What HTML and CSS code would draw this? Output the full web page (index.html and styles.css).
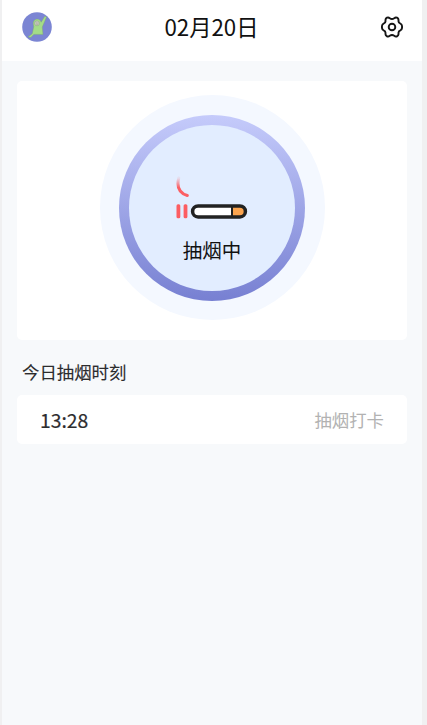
FILE: index.html
```html
<!DOCTYPE html>
<html lang="zh-CN">
<head>
<meta charset="utf-8">
<title>抽烟记录</title>
<link rel="stylesheet" href="styles.css">
</head>
<body>
<div class="app">
  <header class="header">
    <svg class="avatar" viewBox="0 0 30 30">
      <circle cx="15" cy="15" r="14.8" fill="#7b85d3"/>
      <path d="M11.800 14.500C10.300 10.500 12 7.300 15 7.100c2.200 0 3.600 1.300 4.100 3.100L22.800 4.300l1.800.6-4.300 10.200.7 7.300h-9.200L8.800 25.400l-2.800-.3 4.200-3.400z" fill="#a4dc88" stroke="#78a273" stroke-width=".4" stroke-linejoin="round"/>
      <circle cx="15" cy="11.300" r="2.500" fill="#c3c9ba" stroke="#7d9877" stroke-width=".4"/>
      <path d="M14 11h.7M15.700 11h.7M14.600 12.400h1" stroke="#8c7d83" stroke-width=".5"/>
    </svg>
    <h1 class="date">02月20日</h1>
    <svg class="settings" viewBox="0 0 22 22" fill="none" stroke="#161616" stroke-width="1.900" stroke-linejoin="round">
      <path d="M6 1.700C7.100 1.100 8 1.500 8.800 2.300Q11 3.800 13.200 2.300C14 1.500 14.900 1.100 16 1.700C17.500 2.500 17.700 3.400 17.500 4.700Q17.300 7 19.400 7.700C20.800 8.200 21.100 9.500 21.100 11S20.800 13.800 19.400 14.300Q17.300 15 17.500 17.300C17.700 18.600 17.500 19.500 16 20.300C14.900 20.900 14 20.500 13.200 19.700Q11 18.200 8.800 19.700C8 20.500 7.100 20.900 6 20.300C4.500 19.500 4.300 18.600 4.500 17.300Q4.700 15 2.600 14.300C1.200 13.800.9 12.500.9 11S1.200 8.200 2.600 7.700Q4.700 7 4.500 4.700C4.300 3.400 4.500 2.500 6 1.700Z"/>
      <circle cx="11" cy="11" r="3.300"/>
    </svg>
  </header>
  <main class="content">
    <section class="card">
      <div class="halo">
        <div class="ring">
          <div class="dial">
            <svg class="cigarette" viewBox="0 0 74 46">
              <defs>
                <linearGradient id="smoke" x1="0" y1="0" x2="0" y2="1">
                  <stop offset="0" stop-color="#fb5f64" stop-opacity=".1"/>
                  <stop offset=".55" stop-color="#fb5f64"/>
                </linearGradient>
              </defs>
              <path d="M3.700 2C2 9 2.600 16.500 12.300 19.500" fill="none" stroke="url(#smoke)" stroke-width="3" stroke-linecap="round"/>
              <rect x="1.500" y="28.300" width="3.800" height="14" rx="1.500" fill="#fc5d62"/>
              <rect x="8.600" y="28.300" width="3.800" height="14" rx="1.500" fill="#fc5d62"/>
              <rect x="17.600" y="29.900" width="52.800" height="11" rx="5.500" fill="#fff"/>
              <path d="M57 29.900h7.900a5.500 5.500 0 0 1 0 11H57z" fill="#fca44e"/>
              <path d="M57 29.700v11.400" stroke="#222" stroke-width="2"/>
              <rect x="17.600" y="29.900" width="52.800" height="11" rx="5.500" fill="none" stroke="#222" stroke-width="3.500"/>
            </svg>
            <span class="status">抽烟中</span>
          </div>
        </div>
      </div>
    </section>
    <h2 class="heading">今日抽烟时刻</h2>
    <div class="record">
      <span class="time">13:28</span>
      <span class="label">抽烟打卡</span>
    </div>
  </main>
</div>
</body>
</html>
```
FILE: styles.css
```css
* { box-sizing: border-box; }
body {
  margin: 0;
  background: #f0f0f1;
  font-family: "Noto Sans CJK SC", sans-serif;
  color: #161616;
}
.app {
  height: 725px;
  margin: 0 5px 0 2px;
  background: #f7f9fb;
}
.header {
  height: 61px;
  padding: 0 19px 8px 20px;
  display: grid;
  grid-template-columns: 30px 1fr 22px;
  align-items: center;
  background: #fff;
}
.avatar { width: 30px; height: 30px; }
.date {
  margin: 0 0 1px;
  padding-right: 10px;
  font-size: 22.300px;
  font-weight: 400;
  line-height: 30px;
  text-align: center;
  color: #111;
}
.settings { width: 22px; height: 22px; }
.content { padding: 20px 15px 0; }
.card {
  height: 259px;
  padding-top: 14px;
  border-radius: 5px;
  background: #fff;
}
.halo {
  width: 225px;
  height: 225px;
  margin: 0 auto;
  display: grid;
  place-items: center;
  border-radius: 50%;
  background: #f4f8ff;
}
.ring {
  width: 186px;
  height: 186px;
  display: grid;
  place-items: center;
  border-radius: 50%;
  background: linear-gradient(#c5cbfb, #7780d2);
}
.dial {
  width: 166px;
  height: 166px;
  padding-top: 51px;
  display: flex;
  flex-direction: column;
  align-items: center;
  border-radius: 50%;
  background: #e2edff;
}
.cigarette { width: 74px; height: 46px; }
.status {
  margin-top: 14px;
  font-size: 19.500px;
  line-height: 28px;
  color: #111;
}
.heading {
  margin: 19px 0 0 5px;
  font-size: 17.400px;
  font-weight: 400;
  line-height: 25px;
  color: #2c2c2e;
  -webkit-text-stroke: .1px #2c2c2e;
}
.record {
  height: 49px;
  margin-top: 11px;
  padding: 0 23px;
  display: flex;
  align-items: center;
  justify-content: space-between;
  border-radius: 5px;
  background: #fff;
}
.time {
  font-size: 19.300px;
  color: #2c2c2e;
  -webkit-text-stroke: .2px #2c2c2e;
}
.label {
  font-size: 17.400px;
  color: #b2b2b2;
}
```
